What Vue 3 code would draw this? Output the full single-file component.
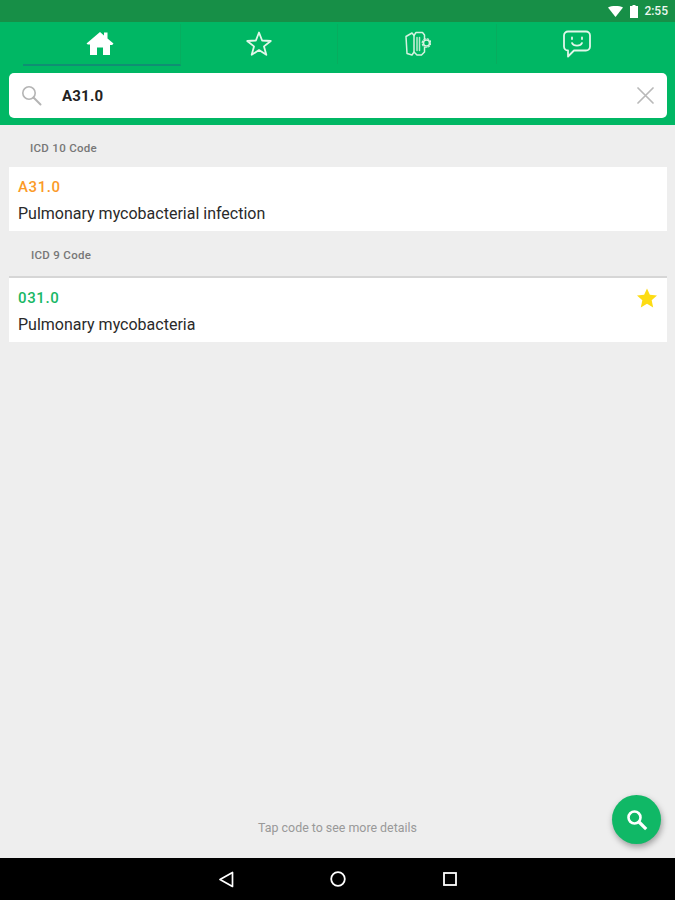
<script setup>
const sections = [
  { title: 'ICD 10 Code', titleClass: 'label-ten', code: 'A31.0', codeClass: 'orange', desc: 'Pulmonary mycobacterial infection', star: false },
  { title: 'ICD 9 Code', titleClass: 'label-nine', code: '031.0', codeClass: 'green', desc: 'Pulmonary mycobacteria', star: true },
]
</script>

<template>
  <div class="page">
    <div class="status">
      <svg class="wifi" width="15" height="11" viewBox="0 0 15 11"><path d="M0 1.500C2 .4 4.600 0 7.500 0s5.500.4 7.500 1.500L7.500 11z" fill="#fff"/></svg>
      <svg class="battery" width="8" height="13" viewBox="0 0 8 13"><path d="M2.500 0h3v1H8v12H0V1h2.500z" fill="#fff"/></svg>
      <span class="time">2:55</span>
    </div>
    <header class="head">
      <nav class="tabs">
        <div class="tab active">
          <svg class="home" width="30" height="26" viewBox="0 0 30 26"><path d="M1.500 13.500 15 2l4 3.400V2.500h3.500v5.900l6 5.100-1.300 1.500H25V25h-7v-7.500h-6V25H5V14.500H2.800z" fill="#fff"/></svg>
        </div>
        <div class="tab">
          <svg width="28" height="27" viewBox="0 0 28 27"><path d="M14 2.500 17.100 10.500 25.800 11 19 16.400 21.300 24.800 14 20.100 6.700 24.800 9 16.400 2.200 11 10.900 10.500z" fill="none" stroke="#e2f7ea" stroke-width="1.800" stroke-linejoin="round"/></svg>
        </div>
        <div class="tab">
          <svg width="28" height="27" viewBox="0 0 28 27" fill="none" stroke="#d5f2e0" stroke-width="1.500" stroke-linejoin="round" stroke-linecap="round"><path d="M3 6.500 9 3l2 2.500V22l-2 3-5-1.500z"/><path d="M11 5.500 13 2.500h6.500L21.500 5v3.500M21.500 17.500V22l-3 3h-4.500L11 22"/><path d="M14 7.500v13M16.500 7.500v13" stroke="#b9ecce"/><circle cx="23.500" cy="13" r="3"/><circle cx="23.500" cy="13" r="4.300" stroke-width="1.200" stroke-dasharray="1.600 1.800"/></svg>
        </div>
        <div class="tab">
          <svg class="chat" width="30" height="28" viewBox="0 0 30 28" fill="none" stroke="#e2f7ea" stroke-width="1.800" stroke-linecap="round" stroke-linejoin="round"><path d="M6 1.500h18a4 4 0 0 1 4 4v11a4 4 0 0 1-4 4H12l-6 6v-6a4 4 0 0 1-4-4v-11a4 4 0 0 1 4-4z"/><path d="M10 13c1.500 3.500 8.500 3.500 10 0"/><path d="M10 7.500v1.500M20 7.500v1.500"/></svg>
        </div>
      </nav>
      <div class="search">
        <svg class="search-icon" width="21" height="21" viewBox="0 0 21 21" fill="none" stroke="#b4b4b4" stroke-width="1.600"><circle cx="8" cy="8" r="6.200"/><path d="m12.500 12.500 7 7" stroke-width="2" stroke-linecap="round"/></svg>
        <span class="query">A31.0</span>
        <svg class="clear" width="17" height="17" viewBox="0 0 17 17" stroke="#b9b9b9" stroke-width="1.700" stroke-linecap="round"><path d="m1 1 15 15M16 1 1 16"/></svg>
      </div>
    </header>

    <main class="content">
      <section v-for="s in sections" :key="s.code" class="section">
        <h2 :class="s.titleClass">{{ s.title }}</h2>
        <div class="card">
          <div class="code-row">
            <span class="code" :class="s.codeClass">{{ s.code }}</span>
            <svg v-if="s.star" width="20" height="20" viewBox="0 0 21 20"><path d="M10.500 0 13.500 6.700 21 7.500 15.400 12.400 17 20 10.500 16.100 4 20 5.600 12.400 0 7.500 7.500 6.700z" fill="#fddc14"/></svg>
          </div>
          <p class="desc">{{ s.desc }}</p>
        </div>
      </section>
      <p class="hint">Tap code to see more details</p>
      <button class="fab" type="button" aria-label="Search">
        <svg width="22" height="22" viewBox="0 0 22 22" fill="none" stroke="#fff" stroke-width="2.600"><circle cx="8.500" cy="8.500" r="6"/><path d="m13 13 7.200 7.200" stroke-width="3.200"/></svg>
      </button>
    </main>

    <footer class="nav">
      <svg width="16" height="17" viewBox="0 0 16 17"><path d="M14.500 1.500v14L2 8.500z" fill="none" stroke="#fff" stroke-width="1.700" stroke-linejoin="round"/></svg>
      <svg width="16" height="16" viewBox="0 0 16 16"><circle cx="8" cy="8" r="6.800" fill="none" stroke="#fff" stroke-width="1.800"/></svg>
      <svg width="14" height="14" viewBox="0 0 14 14"><rect x="1" y="1" width="12" height="12" fill="none" stroke="#fff" stroke-width="1.800"/></svg>
    </footer>
  </div>
</template>

<style>
html, body { margin: 0; padding: 0; }
</style>

<style scoped>
.page {
  width: 675px;
  height: 900px;
  display: flex;
  flex-direction: column;
  overflow: hidden;
  background: #eeeeee;
  font-family: Roboto, "Liberation Sans", sans-serif;
}
.status {
  height: 22px;
  flex: none;
  background: #178f47;
  display: flex;
  align-items: center;
  justify-content: flex-end;
  padding-right: 7px;
  box-sizing: border-box;
  color: #fff;
}
.wifi { margin-right: 7px; }
.battery { margin-right: 6px; }
.time { font-size: 12px; font-weight: 500; color: #eef8f1; }
.head {
  height: 103px;
  flex: none;
  background: #00b764;
  box-sizing: border-box;
  padding: 0 8px 0 9px;
}
.tabs {
  height: 44px;
  margin: 0 12px 0 14px;
  display: grid;
  grid-template-columns: 158px 157px 159px 158px;
}
.tab {
  display: flex;
  align-items: center;
  justify-content: center;
  border-right: 1px solid #07ad5f;
  box-sizing: border-box;
  height: 40px;
  margin-top: 2px;
  padding-bottom: 2px;
}
.tab:last-child { border-right: 0; }
.tab.active { border-bottom: 2px solid #0f8f73; height: 42px; }
.home { margin-right: 3px; }
.chat { margin: 2px 0 0 2px; }
.search {
  height: 45px;
  margin-top: 7px;
  background: #fff;
  border-radius: 5px;
  display: flex;
  align-items: center;
  padding: 0 13px 0 12px;
}
.query {
  margin-left: 20px;
  font-size: 15px;
  font-weight: 700;
  letter-spacing: .2px;
  color: #222;
  flex: 1;
}
.content {
  flex: 1;
  position: relative;
  box-sizing: border-box;
  padding: 0 8px 0 9px;
}
h2 {
  margin: 0;
  font-size: 11.500px;
  font-weight: 500;
  letter-spacing: .3px;
  color: #777;
}
.label-ten { padding: 16px 0 12px 21px; line-height: 14px; }
.label-nine { padding: 17px 0 14px 22px; line-height: 14px; border-bottom: 2px solid #d6d6d6; }
.card {
  background: #fff;
  height: 64px;
  box-sizing: border-box;
  padding: 10px 10px 0 9px;
}
.code-row {
  height: 20px;
  display: flex;
  align-items: center;
  justify-content: space-between;
}
.code { font-size: 15px; font-weight: 500; letter-spacing: .6px; }
.orange { color: #fb9a28; }
.green { color: #18b765; }
.desc {
  margin: 8px 0 0;
  font-size: 16px;
  line-height: 18px;
  color: #2a2a2a;
}
.hint {
  position: absolute;
  left: 0;
  right: 0;
  top: 695px;
  margin: 0;
  text-align: center;
  font-size: 12.400px;
  color: #999;
}
.fab {
  position: absolute;
  right: 14px;
  top: 670px;
  width: 49px;
  height: 49px;
  border-radius: 50%;
  border: 0;
  padding: 0;
  background: #10b866;
  box-shadow: 1px 3px 6px rgba(0, 0, 0, .35);
  display: flex;
  align-items: center;
  justify-content: center;
}
.nav {
  height: 42px;
  flex: none;
  background: #000;
  display: grid;
  grid-template-columns: 112px 112px 112px;
  justify-content: center;
  justify-items: center;
  align-items: center;
}
</style>
